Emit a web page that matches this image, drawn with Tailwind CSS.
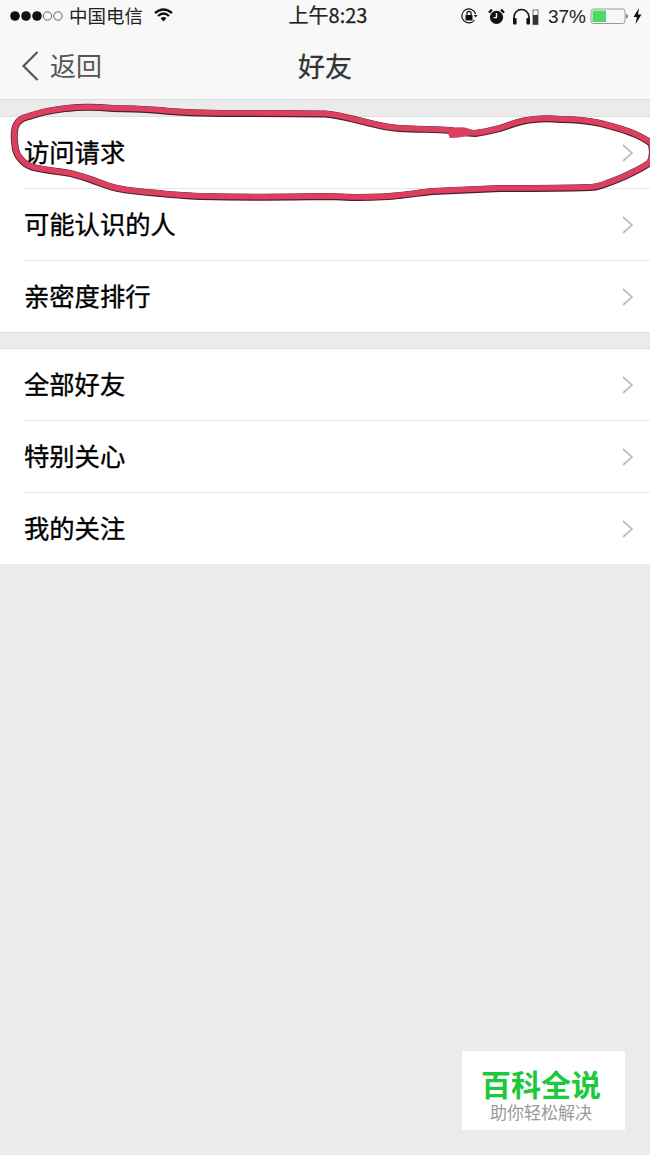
<!DOCTYPE html>
<html lang="zh-CN">
<head>
<meta charset="UTF-8" />
<meta name="viewport" content="width=device-width, initial-scale=1.0" />
<title>好友</title>
<script src="https://cdn.jsdelivr.net/npm/@tailwindcss/browser@4"></script>
</head>
<body class="bg-[#ebebeb] font-['Noto_Sans_CJK_SC','Liberation_Sans',sans-serif] text-black">
<div class="relative w-[650px] h-[1155px] overflow-hidden">

  <!-- Status bar + nav -->
  <header class="bg-[#f8f8f8] border-b border-[#dcdcdc] h-[100px]">
    <div class="grid grid-cols-[1fr_auto_1fr] items-center h-[32px] text-[#222]">
      <div class="flex items-center pl-[10px]">
        <svg class="w-[54px] h-[12px]" viewBox="0 0 54 12">
          <circle cx="5" cy="6" r="4.8" fill="#111"/>
          <circle cx="16" cy="6" r="4.8" fill="#111"/>
          <circle cx="27" cy="6" r="4.8" fill="#111"/>
          <circle cx="37.5" cy="6" r="4.2" fill="none" stroke="#555" stroke-width="0.9"/>
          <circle cx="48" cy="6" r="4.2" fill="none" stroke="#555" stroke-width="0.9"/>
        </svg>
        <span class="ml-[5px] text-[18.5px] leading-none pb-[2px]">中国电信</span>
        <svg class="ml-[11px] w-[19px] h-[14px] mb-[2px]" viewBox="0 0 19 14">
          <path d="M1 5 Q9.5 -2 18 5" fill="none" stroke="#111" stroke-width="2.3"/>
          <path d="M4 8 Q9.5 3 15 8" fill="none" stroke="#111" stroke-width="2.3"/>
          <path d="M6.6 10.2 Q9.5 7.6 12.4 10.2 L9.5 13.6 Z" fill="#111"/>
        </svg>
      </div>
      <div class="text-[20px] leading-none pl-[6px] pb-[2px] [-webkit-text-stroke:0.25px_#222]">上午8:23</div>
      <div class="flex items-center justify-end pr-[8px]">
        <svg class="w-[18px] h-[18px]" viewBox="0 0 18 18">
          <path d="M14.5 13 A7 7 0 1 1 15.6 7" fill="none" stroke="#111" stroke-width="1.2"/>
          <path d="M13.8 8 L17.4 8 L15.6 10.4 Z" fill="#111"/>
          <rect x="5.5" y="8" width="7" height="5.5" rx="0.8" fill="#111"/>
          <path d="M6.9 8 V6.4 A2.1 2.1 0 0 1 11.1 6.4 V8" fill="none" stroke="#111" stroke-width="1.2"/>
        </svg>
        <svg class="ml-[10px] w-[17px] h-[17px]" viewBox="0 0 17 17">
          <circle cx="8.5" cy="9.3" r="6.6" fill="#111"/>
          <path d="M8.5 5 V9.6 H5.6" fill="none" stroke="#f8f8f8" stroke-width="1.4"/>
          <path d="M1 4.6 L4 1.6 M16 4.6 L13 1.6" stroke="#111" stroke-width="2.2"/>
        </svg>
        <svg class="ml-[7px] w-[27px] h-[17px]" viewBox="0 0 27 17">
          <path d="M2 15 V9 A7.5 7.5 0 0 1 17 9 V15" fill="none" stroke="#111" stroke-width="1.6"/>
          <rect x="1" y="10" width="3.6" height="6.4" rx="1" fill="#111"/>
          <rect x="14.4" y="10" width="3.6" height="6.4" rx="1" fill="#111"/>
          <rect x="21" y="2" width="5" height="14.5" fill="none" stroke="#666" stroke-width="0.9"/>
          <rect x="21" y="7" width="5" height="9.5" fill="#333"/>
        </svg>
        <span class="ml-[9px] text-[19px] leading-none font-['Liberation_Sans',sans-serif]">37%</span>
        <svg class="ml-[4px] w-[40px] h-[17px]" viewBox="0 0 40 17">
          <rect x="1" y="1" width="34" height="14.5" rx="2.5" fill="none" stroke="#9a9a9a" stroke-width="1"/>
          <rect x="2.5" y="2.5" width="13.5" height="11.5" fill="#4cd964"/>
          <path d="M36.4 6 C38 6.4 38 10 36.4 10.4 Z" fill="#333"/>
        </svg>
        <svg class="ml-[3px] w-[9px] h-[16px]" viewBox="0 0 9 16">
          <path d="M6 0 L0.5 9 H3.8 L2.6 16 L8.5 6.4 H5 Z" fill="#111"/>
        </svg>
      </div>
    </div>
    <div class="relative flex items-center justify-center h-[67px]">
      <div class="absolute left-[22px] top-0 h-full flex items-center">
        <svg class="w-[17px] h-[30px]" viewBox="0 0 17 30">
          <path d="M15.5 1 L1.5 15 L15.5 29" fill="none" stroke="#555" stroke-width="2.2"/>
        </svg>
        <span class="ml-[11px] text-[26px] leading-none text-[#555] pb-[1px]">返回</span>
      </div>
      <h1 class="text-[27px] leading-none text-[#333] pb-[1px] [-webkit-text-stroke:0.3px_#333]">好友</h1>
    </div>
  </header>

  <!-- Lists -->
  <main class="pt-[16px]">
    <ul class="bg-white border-y border-[#dedede]">
      <li class="h-[72px] ml-[24px] pr-[17px] flex items-center justify-between text-[25.3px] border-b border-[#e6e6e6]">
        <span class="pb-[2px] [-webkit-text-stroke:0.35px_#000]">访问请求</span>
        <svg class="w-[11px] h-[18px]" viewBox="0 0 11 18"><path d="M1 1 L10 9 L1 17" fill="none" stroke="#bdbdbd" stroke-width="1.8"/></svg>
      </li>
      <li class="h-[72px] ml-[24px] pr-[17px] flex items-center justify-between text-[25.3px] border-b border-[#e6e6e6]">
        <span class="pb-[2px] [-webkit-text-stroke:0.35px_#000]">可能认识的人</span>
        <svg class="w-[11px] h-[18px]" viewBox="0 0 11 18"><path d="M1 1 L10 9 L1 17" fill="none" stroke="#bdbdbd" stroke-width="1.8"/></svg>
      </li>
      <li class="h-[71px] ml-[24px] pr-[17px] flex items-center justify-between text-[25.3px]">
        <span class="pb-[2px] [-webkit-text-stroke:0.35px_#000]">亲密度排行</span>
        <svg class="w-[11px] h-[18px]" viewBox="0 0 11 18"><path d="M1 1 L10 9 L1 17" fill="none" stroke="#bdbdbd" stroke-width="1.8"/></svg>
      </li>
    </ul>
    <ul class="mt-[15px] bg-white border-t border-[#dedede]">
      <li class="h-[72px] ml-[24px] pr-[17px] flex items-center justify-between text-[25.3px] border-b border-[#e6e6e6]">
        <span class="pb-[2px] [-webkit-text-stroke:0.35px_#000]">全部好友</span>
        <svg class="w-[11px] h-[18px]" viewBox="0 0 11 18"><path d="M1 1 L10 9 L1 17" fill="none" stroke="#bdbdbd" stroke-width="1.8"/></svg>
      </li>
      <li class="h-[72px] ml-[24px] pr-[17px] flex items-center justify-between text-[25.3px] border-b border-[#e6e6e6]">
        <span class="pb-[2px] [-webkit-text-stroke:0.35px_#000]">特别关心</span>
        <svg class="w-[11px] h-[18px]" viewBox="0 0 11 18"><path d="M1 1 L10 9 L1 17" fill="none" stroke="#bdbdbd" stroke-width="1.8"/></svg>
      </li>
      <li class="h-[71px] ml-[24px] pr-[17px] flex items-center justify-between text-[25.3px]">
        <span class="pb-[2px] [-webkit-text-stroke:0.35px_#000]">我的关注</span>
        <svg class="w-[11px] h-[18px]" viewBox="0 0 11 18"><path d="M1 1 L10 9 L1 17" fill="none" stroke="#bdbdbd" stroke-width="1.8"/></svg>
      </li>
    </ul>
  </main>

  <!-- Hand-drawn annotation -->
  <svg class="absolute left-0 top-0 pointer-events-none" width="650" height="220" viewBox="0 0 650 220">
    <defs>
      <path id="ring" fill="none" stroke-linejoin="round" d="M67 108 C85 106 100 107 113 108 C130 108 146 109 160 110 C185 113 210 113 233 113 C265 113 295 113 325 113.5 C340 115 350 118 358 120 C375 124 388 128 400 128 C418 129 434 129 450 130 C458 132 466 133 475 133 C485 132 492 130 500 128 C510 125 518 121 527 120 C538 118 549 118 560 119 C574 119 587 120 600 123 C612 126 623 129 633 133 C640 136 646 139 651 143 C653 149 653 156 650 162 C645 166 639 169 633 172 C625 176 616 180 607 183 C602 185 596 187 590 187 C560 188 530 188 500 188 C478 189 455 190 433 191 C422 192 411 194 400 195 C386 197 372 197 358 197 C347 197 336 196 325 196 C283 197 241 197 200 196 C186 195 173 195 160 193 C145 192 131 191 117 188 C108 186 101 183 93 180 C85 177 78 175 70 173 C58 171 45 170 33 167 C27 165 23 162 20 158 C17 154 15 150 15 145 C14 139 14 133 15 128 C16 123 19 120 23 118 C29 116 36 114 43 112 C51 110 59 109 67 108 Z"/>
    </defs>
    <use href="#ring" stroke="#4a1f2c" stroke-width="7" transform="translate(0 0.4)"/>
    <use href="#ring" stroke="#dd3f5f" stroke-width="5.5"/>
    <path d="M449 129 C458 126 471 127 476 133 C466 137 457 138 450 138 C448 135 448 132 449 129 Z" fill="#dd3f5f"/>
  </svg>

  <!-- Watermark -->
  <div class="absolute left-[462px] top-[1051px] w-[163px] h-[79px] bg-white flex flex-col items-center pt-[14px]">
    <div class="text-[30px] leading-[36px] font-bold text-[#1cc93a] pr-[5px]">百科全说</div>
    <div class="text-[17px] leading-[22px] text-[#999] pr-[5px]">助你轻松解决</div>
  </div>
</div>
</body>
</html>
